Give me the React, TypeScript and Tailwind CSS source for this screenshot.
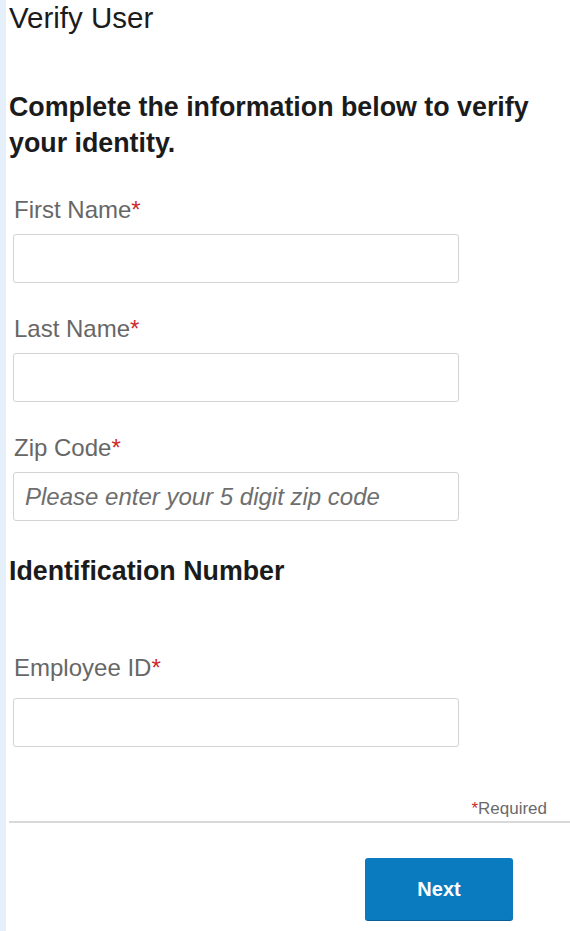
import React from 'react'

interface FieldProps {
    label: string;
    placeholder?: string;
    className?: string;
    gap?: string;
}

function Field({ label, placeholder, className = '', gap = 'mt-[10px]' }: FieldProps) {
    return (
        <div className={className}>
            <label className="block pl-[5px] text-[24px] leading-[28px] text-[#676767]">
                {label}
                <span className="text-[#cc2b2b]">*</span>
            </label>
            <input
                type="text"
                placeholder={placeholder}
                className={`${gap} block ml-[4px] h-[49px] w-[446px] rounded-[3px] border border-[#d3d3d3] bg-white px-[11px] text-[24px] text-[#333] outline-none placeholder:italic placeholder:text-[#6e6e6e]`}
            />
        </div>
    );
}

export default function App() {
    return (
        <div
            className="flex min-h-[931px] bg-white"
            style={{ fontFamily: '"Liberation Sans", Arial, sans-serif' }}
        >
            <div className="w-[6px] shrink-0 bg-[#e6f0fa]" />
            <div className="flex-1 pl-[3px]">
                <h1 className="pt-[2px] text-[29.5px] leading-[32px] text-[#1b1b1b]">Verify User</h1>

                <h2 className="mt-[55px] pr-[20px] text-[26.8px] font-bold leading-[36px] text-[#1b1b1b]">
                    Complete the information below to verify your identity.
                </h2>

                <Field label="First Name" className="mt-[35px]" />
                <Field label="Last Name" className="mt-[32px]" />
                <Field label="Zip Code" className="mt-[32px]" placeholder="Please enter your 5 digit zip code" />

                <h2 className="mt-[32px] text-[26.8px] font-bold leading-[36px] text-[#1b1b1b]">
                    Identification Number
                </h2>

                <Field label="Employee ID" className="mt-[65px]" gap="mt-[16px]" />

                <div className="mt-[52px] pr-[23px] text-right text-[17px] leading-[20px] text-[#6a6a6a]">
                    <span className="text-[#cc2b2b]">*</span>Required
                </div>

                <div className="mt-[2px] border-t-2 border-[#d9d9d9]" />

                <div className="mt-[35px] flex justify-end pr-[57px]">
                    <button
                        type="button"
                        className="h-[62px] w-[148px] rounded-[3px] bg-[#0b7bc0] text-[20px] font-bold text-white shadow-[0_1px_0_#07609a]"
                    >
                        Next
                    </button>
                </div>
            </div>
        </div>
    );
}
